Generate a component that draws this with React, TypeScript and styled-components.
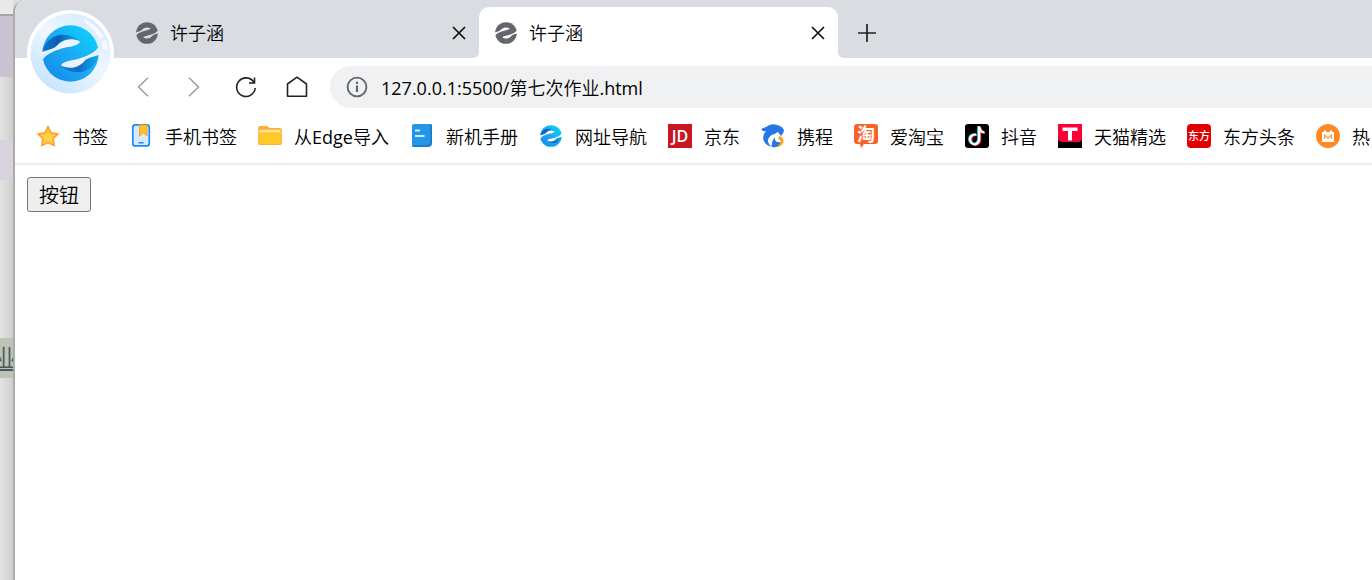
import React, { useId } from "react";
import styled, { createGlobalStyle } from "styled-components";

const Global = createGlobalStyle`
  * { box-sizing: border-box; }
  body { margin: 0; background: #fff; overflow: hidden; }
  body, button, input { font-family: "Open Sans", "Noto Sans CJK SC DemiLight", "Noto Sans CJK SC", sans-serif; font-weight: 400; color: #000; }
`;

const Desktop = styled.div`
  display: flex;
  min-height: 100vh;
  background: #dedede;
`;

const Behind = styled.aside`
  flex: 0 0 13px;
  display: flex;
  flex-direction: column;
  background: linear-gradient(90deg, #e2e2e2, #cfcfcf);
  overflow: hidden;
`;

const Band = styled.div<{ $h: number; $c?: string; $line?: boolean }>`
  flex: 0 0 ${(p) => p.$h}px;
  background: ${(p) => p.$c ?? "transparent"};
  border-bottom: ${(p) => (p.$line ? "2px solid #a3a6aa" : "0")};
`;

const FileBand = styled(Band)`
  display: flex;
  justify-content: center;
  align-items: center;
  color: #50575c;
  font-size: 24px;
  line-height: 28px;
  text-decoration: underline;
`;

const BrowserWindow = styled.main`
  flex: 1;
  min-width: 0;
  display: flex;
  flex-direction: column;
  border-left: 2px solid #ababab;
  border-top-left-radius: 12px;
  background: #fff;
  overflow: hidden;
`;

const Chrome = styled.header`
  position: relative;
  border-bottom: 2px solid #ededed;
`;

const Logo = styled.div`
  position: absolute;
  left: 12px;
  top: 10px;
  width: 87px;
  height: 87px;
`;

const TabBar = styled.div`
  display: flex;
  height: 58px;
  padding: 7px 0 0 105px;
  background: #d9dce1;
`;

const Tab = styled.div<{ $active?: boolean }>`
  position: relative;
  flex: 0 0 359px;
  display: flex;
  align-items: center;
  gap: 12px;
  padding: 0 9px 0 16px;
  border-radius: 10px 10px 0 0;
  background: ${(p) => (p.$active ? "#fff" : "transparent")};
  &::before, &::after {
    content: "";
    display: ${(p) => (p.$active ? "block" : "none")};
    position: absolute;
    bottom: 0;
    width: 6px;
    height: 6px;
  }
  &::before { left: -6px; background: radial-gradient(circle at 0 0, transparent 6px, #fff 6px); }
  &::after { right: -6px; background: radial-gradient(circle at 100% 0, transparent 6px, #fff 6px); }
`;

const TabTitle = styled.span`
  flex: 1;
  font-size: 18px;
  line-height: 28px;
`;

const IconButton = styled.button<{ $w: number }>`
  display: flex;
  align-items: center;
  justify-content: center;
  width: ${(p) => p.$w}px;
  height: 24px;
  padding: 0;
  border: 0;
  background: none;
`;

const NewTab = styled(IconButton)`
  align-self: center;
  margin-left: 17px;
`;

const Toolbar = styled.div`
  display: flex;
  align-items: center;
  height: 58px;
  padding-left: 102px;
`;

const AddressBox = styled.label`
  flex: 1;
  display: flex;
  align-items: center;
  gap: 13px;
  height: 42px;
  margin-left: 8px;
  padding-left: 16px;
  border-radius: 21px 0 0 21px;
  background: #f0f1f3;
`;

const Address = styled.input`
  flex: 1;
  padding: 2px 0 0;
  border: 0;
  background: none;
  font-size: 18px;
  line-height: 28px;
  outline: none;
`;

const Bookmarks = styled.nav`
  display: flex;
  gap: 21px;
  height: 47px;
  padding: 8px 0 0 21px;
  overflow: hidden;
`;

const Bookmark = styled.a`
  flex: none;
  display: flex;
  gap: 12px;
  color: inherit;
  text-decoration: none;
  font-size: 18px;
  line-height: 26px;
  white-space: nowrap;
  svg { flex: none; }
`;

const Page = styled.section`
  flex: 1;
  padding: 12px;
`;

const PageButton = styled.button`
  height: 35px;
  padding: 2px 11px 0;
  border: 1px solid #767676;
  border-radius: 3px;
  background: #efefef;
  font-size: 20px;
  line-height: 31px;
`;

const CUT = "M122 157C150 149 163 146 170 139C184 122 208 111 238 123C244 130 226 137 205 141C178 147 145 157 131 177L120 177Z";

function Swirl({ size, tone, pad = 0 }: { size: number; tone: "gray" | "blue"; pad?: number }) {
  const id = useId();
  const span = 168 + 2 * pad;
  return (
    <svg width={size} height={size} viewBox={`${128 - pad} ${76 - pad} ${span} ${span}`} aria-hidden="true">
      <defs>
        <mask id={id + "m"} maskUnits="userSpaceOnUse" x="120" y="70" width="184" height="184">
          <circle cx="212" cy="160" r="83" fill="#fff" />
          <path d={CUT} fill="#000" />
          <path d={CUT} fill="#000" transform="rotate(180 212 160)" />
        </mask>
        <linearGradient id={id + "g"} x1="1" y1="0" x2="0" y2="1">
          <stop offset=".2" stopColor="#10c8f8" />
          <stop offset=".55" stopColor="#1ca6f3" />
          <stop offset="1" stopColor="#0c80e8" />
        </linearGradient>
        <linearGradient id={id + "d"} x1="0" y1="0" x2="1" y2="0">
          <stop offset="0" stopColor="#0f78d0" />
          <stop offset=".45" stopColor="#0b5cb4" />
          <stop offset="1" stopColor="#0b7fd4" stopOpacity=".3" />
        </linearGradient>
      </defs>
      <g mask={`url(#${id}m)`}>
        <rect x="120" y="70" width="184" height="184" fill={tone === "gray" ? "#63676d" : `url(#${id}g)`} />
        {tone === "blue" && (
          <>
            <path d="M126 160C134 124 168 96 208 107C224 111 234 117 240 125L205 141Z" fill={`url(#${id}d)`} />
            <path d="M298 160C290 196 256 224 216 213C200 209 190 203 184 195L219 179Z" fill={`url(#${id}d)`} opacity=".8" />
          </>
        )}
      </g>
    </svg>
  );
}

function BrowserLogo() {
  return (
    <svg width="87" height="87" viewBox="0 0 87 87" role="img" aria-label="浏览器">
      <defs>
        <linearGradient id="orb" x1=".8" y1=".1" x2=".2" y2=".9">
          <stop offset="0" stopColor="#d6ebff" />
          <stop offset=".45" stopColor="#eff7ff" />
          <stop offset="1" stopColor="#c9e4ff" />
        </linearGradient>
      </defs>
      <circle cx="43.500" cy="43.500" r="43.500" fill="#fff" />
      <circle cx="43.500" cy="43.500" r="40" fill="url(#orb)" />
      <path d="M58 9Q70 15 77 27L73 29Q67 19 57 12Z" fill="#fff" opacity=".7" />
      <path d="M75 31L79 30Q81 35 81 40L76 39Z" fill="#fff" opacity=".7" />
      <svg x="15" y="15" width="57" height="57"><Swirl size={57} tone="blue" /></svg>
    </svg>
  );
}

const Close = () => (
  <svg width="14" height="14" viewBox="0 0 14 14" stroke="#111" strokeWidth="1.700" aria-hidden="true">
    <path d="M1 1L13 13M13 1L1 13" />
  </svg>
);

const Ico = ({ children }: { children: React.ReactNode }) => (
  <svg width="24" height="24" viewBox="0 0 24 24" aria-hidden="true">{children}</svg>
);

const icons = {
  star: (
    <Ico><path d="M12 2.500L15 8.800L22 9.800L17 14.700L18.200 21.500L12 18.500L5.800 21.500L7 14.700L2 9.800L9 8.800Z" fill="#ffd041" stroke="#fba42b" strokeWidth="1.700" strokeLinejoin="round" /></Ico>
  ),
  phone: (
    <Ico>
      <rect x="3.800" y=".9" width="16.500" height="21" rx="2.500" fill="#d8e8ff" stroke="#1e88f7" strokeWidth="1.700" />
      <path d="M10.500 1H18V12L14.300 8.700L10.500 12Z" fill="#ffc02c" stroke="#f8a51b" />
      <path d="M9.500 18.700H14.500" stroke="#1e88f7" strokeWidth="1.500" />
    </Ico>
  ),
  folder: (
    <Ico>
      <path d="M.2 3.500Q.2 2 1.700 2H9L11.500 4H22Q23.800 4 23.800 5.500V19.500Q23.800 21 22 21H2Q.2 21 .2 19.500Z" fill="#ffae35" />
      <path d="M1.500 7Q1.500 5.800 3 5.800H21Q22.500 5.800 22.500 7V10H1.500Z" fill="#ffe6a6" />
      <path d="M1.500 8.200H22.500V19Q22.500 20 21.500 20H2.500Q1.500 20 1.500 19Z" fill="#ffca28" />
    </Ico>
  ),
  manual: (
    <Ico>
      <path d="M4 0H20Q22 0 22 2V19L17 23H3Q2 22 2 20V2Q2 0 4 0Z" fill="#2496e8" />
      <path d="M20 0Q22 0 22 2V19Q22 23 18 23H3L2 21H17Q20 21 20 18Z" fill="#1a7dcb" />
      <path d="M5 6.500H10M5 12H14.500" stroke="#c9edff" strokeWidth="2" />
    </Ico>
  ),
  jd: (
    <Ico>
      <rect width="24" height="24" fill="#c91623" />
      <text x="12" y="18" textAnchor="middle" fontFamily="Open Sans, sans-serif" fontWeight="600" fontSize="16" fill="#fff">JD</text>
    </Ico>
  ),
  ctrip: (
    <Ico>
      <path d="M0 5L5 3Q10-1 16 1Q21 2 23 6Q23 9 20 12L17 8Q12 10 10 14Q8 18 11 23Q3 21 2 14Q2 10 5 7Q2 8 0 5Z" fill="#2577e3" />
      <path d="M12 10Q6 14 7 18Q8 21 11 23Q10 18 14 14Z" fill="#fff" />
      <path d="M11 23Q10 18 14 13Q13 19 19 18L21 20Q17 24 11 23Z" fill="#2577e3" />
      <path d="M18 12Q23 13 22.500 18Q21 23 15 23Q20 20 19.500 17Q19 15 17 15Z" fill="#ffa51f" />
    </Ico>
  ),
  taobao: (
    <Ico>
      <path d="M3 0H21Q24 0 24 3V17Q24 20 21 20H10L7 24L6 20H3Q0 20 0 17V3Q0 0 3 0Z" fill="#fa6128" />
      <text x="12" y="17" textAnchor="middle" fontFamily="Noto Sans CJK SC, sans-serif" fontWeight="700" fontSize="18" fill="#fff">淘</text>
    </Ico>
  ),
  douyin: (
    <Ico>
      <rect width="24" height="24" rx="3" fill="#000" />
      <g fill="none" strokeWidth="2.200">
        <path d="M10.300 10Q4 10.500 4.200 15.600Q5 20 9.500 19.800Q13.300 19 13.300 14.500V2.300Q14 7.500 18.500 7.800" stroke="#25f4ee" />
        <path d="M12 11Q6 11 6.200 16Q7 21 10.900 20.800Q15.200 20 15.200 15.500V3.300Q16 8.500 20 8.800" stroke="#fe2c55" />
        <path d="M11.200 10.500Q4.800 10.500 5.100 15.800Q6 20.300 10 20.300Q14.200 19.500 14.200 15V2.300Q15 8 19.300 8.300" stroke="#fff" />
      </g>
    </Ico>
  ),
  tmall: (
    <Ico>
      <rect width="24" height="24" fill="#ff0036" />
      <path d="M0 16L3 18H21L24 16V24H0Z" fill="#000" />
      <path d="M4.500 3.500H19.500V7H14V16.500H10V7H4.500Z" fill="#fff" />
    </Ico>
  ),
  dongfang: (
    <Ico>
      <rect width="24" height="24" rx="4" fill="#e00000" />
      <text x="12" y="16" textAnchor="middle" fontFamily="Noto Sans CJK SC, sans-serif" fontWeight="500" fontSize="11" fill="#fff">东方</text>
    </Ico>
  ),
  hot: (
    <Ico>
      <circle cx="12" cy="12" r="12" fill="#ff8929" />
      <path d="M6 8H8V6.500H10V8H14V6.500H16V8H18V18H6Z" fill="#fff" />
      <path d="M8.500 15V11L12 14L15.500 11V15" fill="none" stroke="#ffa14f" strokeWidth="1.400" />
    </Ico>
  ),
};

const bookmarks: [React.ReactNode, string][] = [
  [icons.star, "书签"],
  [icons.phone, "手机书签"],
  [icons.folder, "从Edge导入"],
  [icons.manual, "新机手册"],
  [<Swirl size={24} pad={8} tone="blue" />, "网址导航"],
  [icons.jd, "京东"],
  [icons.ctrip, "携程"],
  [icons.taobao, "爱淘宝"],
  [icons.douyin, "抖音"],
  [icons.tmall, "天猫精选"],
  [icons.dongfang, "东方头条"],
  [icons.hot, "热"],
];

export default function App() {
  return (
    <>
      <Global />
      <Desktop>
        <Behind>
          <Band $h={16} $c="#e9e9e9" $line />
          <Band $h={61} $c="#c9c2d3" />
          <Band $h={63} />
          <Band $h={40} $c="#d9d2dc" />
          <Band $h={158} />
          <FileBand $h={40} $c="#bcc3b7">业</FileBand>
        </Behind>
        <BrowserWindow>
          <Chrome>
            <TabBar>
              {[false, true].map((active) => (
                <Tab key={String(active)} $active={active}>
                  <Swirl size={22} tone="gray" />
                  <TabTitle>许子涵</TabTitle>
                  <IconButton $w={22} aria-label="关闭标签页"><Close /></IconButton>
                </Tab>
              ))}
              <NewTab $w={24} aria-label="新建标签页">
                <svg width="18" height="18" viewBox="0 0 18 18" stroke="#222" strokeWidth="1.700"><path d="M9 0V18M0 9H18" /></svg>
              </NewTab>
            </TabBar>
            <Toolbar>
              <IconButton $w={51} aria-label="后退">
                <svg width="12" height="20" viewBox="0 0 12 20" fill="none" stroke="#999" strokeWidth="1.400"><path d="M11 .8L1.500 10L11 19.200" /></svg>
              </IconButton>
              <IconButton $w={52} aria-label="前进">
                <svg width="12" height="20" viewBox="0 0 12 20" fill="none" stroke="#999" strokeWidth="1.400"><path d="M1 .8L10.500 10L1 19.200" /></svg>
              </IconButton>
              <IconButton $w={51} aria-label="刷新">
                <svg width="22" height="22" viewBox="0 0 22 22" fill="none" stroke="#222" strokeWidth="1.600"><path d="M20.200 12A9.300 9.300 0 1 1 18.800 6.200M19.500 1.500V7H14" /></svg>
              </IconButton>
              <IconButton $w={51} aria-label="主页">
                <svg width="22" height="22" viewBox="0 0 22 22" fill="none" stroke="#222" strokeWidth="1.600" strokeLinejoin="round"><path d="M1.500 8L11 1.200L20.500 8V20.300H1.500Z" /></svg>
              </IconButton>
              <AddressBox>
                <svg width="22" height="22" viewBox="0 0 22 22" fill="none" stroke="#63666c" strokeWidth="1.900" aria-hidden="true">
                  <circle cx="11" cy="11" r="9.400" />
                  <path d="M11 9.500V16M11 5.700V8" strokeWidth="2.200" />
                </svg>
                <Address aria-label="地址" defaultValue="127.0.0.1:5500/第七次作业.html" />
              </AddressBox>
            </Toolbar>
            <Bookmarks>
              {bookmarks.map(([icon, label]) => (
                <Bookmark key={label} href="#">{icon}{label}</Bookmark>
              ))}
            </Bookmarks>
            <Logo><BrowserLogo /></Logo>
          </Chrome>
          <Page><PageButton>按钮</PageButton></Page>
        </BrowserWindow>
      </Desktop>
    </>
  );
}
